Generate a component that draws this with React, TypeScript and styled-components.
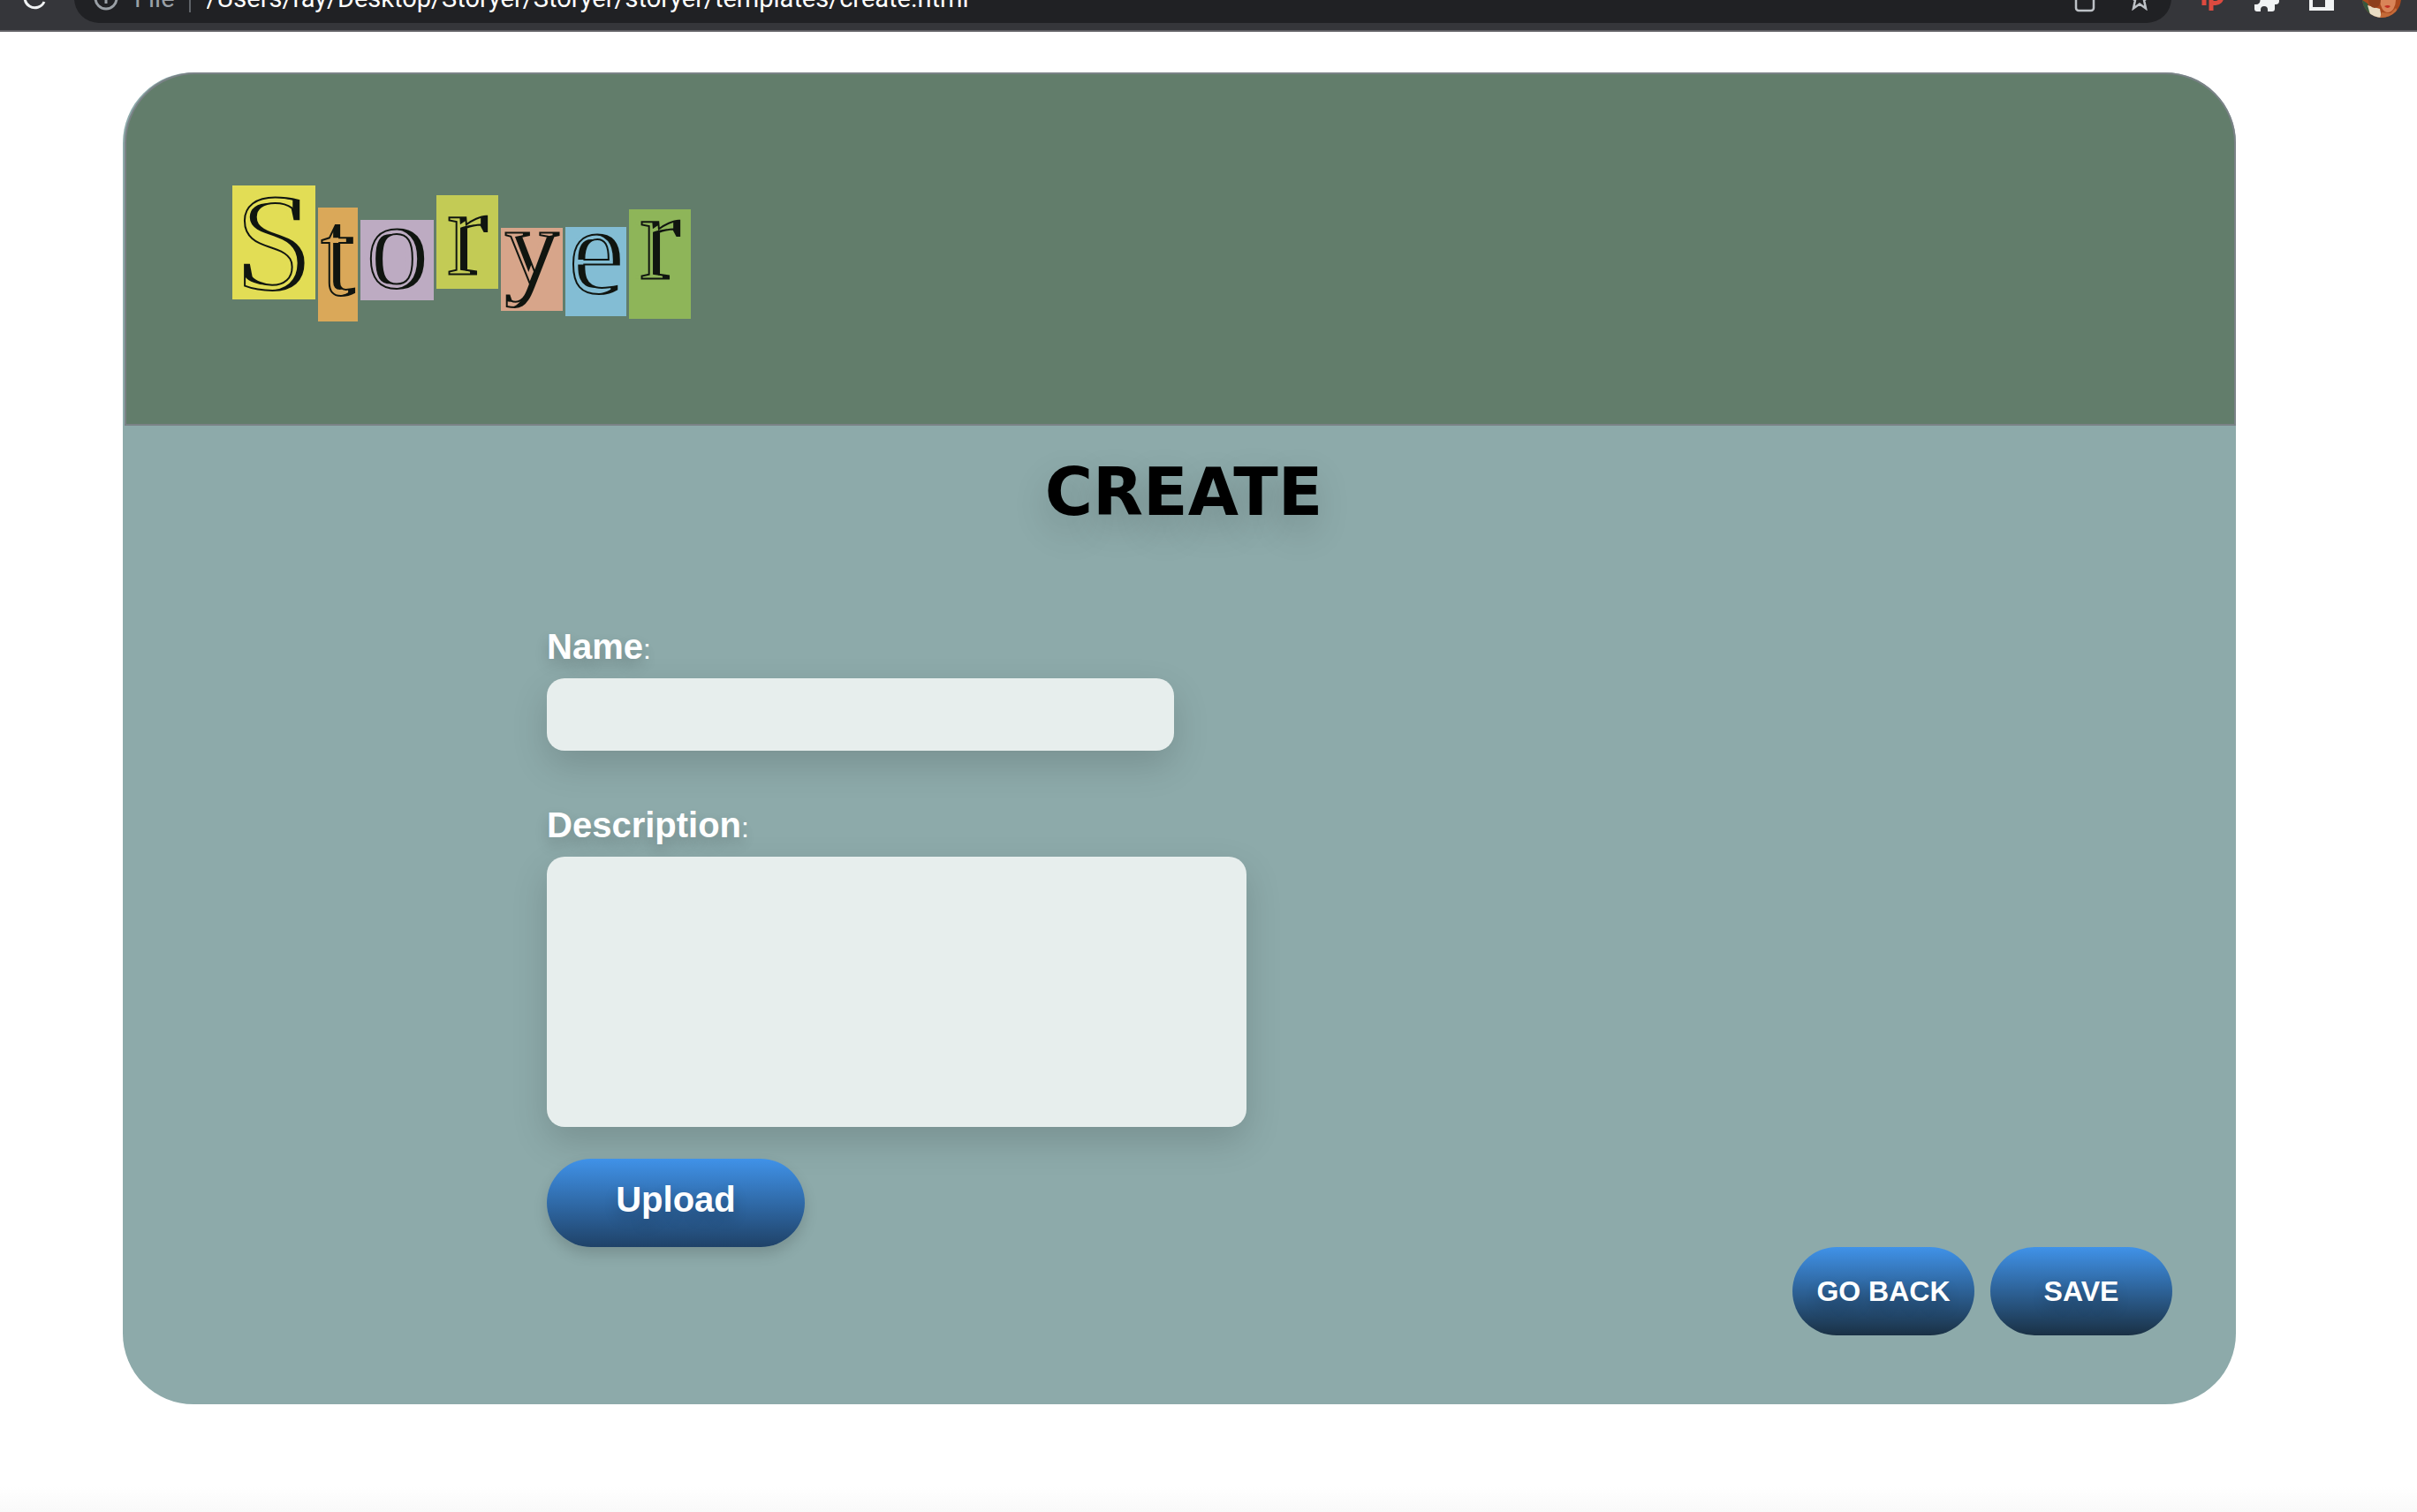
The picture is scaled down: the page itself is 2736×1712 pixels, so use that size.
import React from "react";
import styled, { createGlobalStyle } from "styled-components";

const ink = "#101510";

const GlobalStyle = createGlobalStyle`
  *, *::before, *::after { box-sizing: border-box; }
  body {
    margin: 0;
    background: #ffffff;
    font-family: "Liberation Sans", Arial, sans-serif;
  }
`;

const Page = styled.div`
  min-height: 100vh;
  display: flex;
  flex-direction: column;
`;

const Toolbar = styled.header`
  height: 36px;
  display: flex;
  align-items: flex-end;
  padding-bottom: 8px;
  background: #35363a;
  border-bottom: 2px solid #605f64;
  overflow: hidden;
`;

const ToolGroup = styled.div`
  height: 56px;
  flex: none;
  display: flex;
  align-items: center;
  gap: 32px;
  padding: 0 18px 0 34px;
`;

const ReloadGroup = styled(ToolGroup)`
  width: 84px;
  padding: 0 0 0 26px;
`;

const IconButton = styled.button`
  flex: none;
  display: flex;
  padding: 0;
  border: 0;
  background: none;
  color: inherit;
`;

const AddressBar = styled.div`
  flex: 1;
  min-width: 0;
  height: 56px;
  display: flex;
  align-items: center;
  padding: 0 22px;
  border-radius: 28px;
  background: #202124;
  color: #bdc1c6;
  font-family: Roboto, sans-serif;
  font-size: 29px;
`;

const Scheme = styled.span`
  margin-left: 18px;
  padding-right: 16px;
  border-right: 2px solid #5f6368;
  line-height: 32px;
  color: #9aa0a6;
`;

const AddressInput = styled.input`
  flex: 1;
  min-width: 0;
  margin-left: 18px;
  padding: 0;
  border: 0;
  outline: 0;
  background: none;
  color: #ffffff;
  font: inherit;
`;

const AddressActions = styled.div`
  display: flex;
  align-items: center;
  gap: 36px;
`;

const Main = styled.main`
  flex: 1;
  padding: 46px 205px 80px 139px;
`;

const Card = styled.section`
  border-radius: 80px;
  background: #8daaaa;
`;

const Banner = styled.div`
  height: 400px;
  margin-left: 2px;
  padding: 126px 120px 0;
  border: 2px solid #7a8286;
  border-radius: 80px 80px 0 0;
  background: #627d6b;
`;

const Logo = styled.h1`
  display: flex;
  align-items: flex-start;
  gap: 3px;
  margin: 0;
  font-family: "Liberation Serif", serif;
  font-weight: 400;
`;

const Tile = styled.span<{ $color: string; $w: number; $h: number; $drop: number; $line: number; $size: number }>`
  width: ${(p) => p.$w}px;
  height: ${(p) => p.$h}px;
  margin-top: ${(p) => p.$drop}px;
  display: flex;
  justify-content: center;
  clip-path: inset(0);
  background: ${(p) => p.$color};
  color: transparent;
  font-size: ${(p) => p.$size}px;
  line-height: ${(p) => p.$line}px;
  -webkit-text-stroke: 2px ${ink};
  text-shadow: -7px 0 0 ${(p) => p.$color}, 0 0 0 ${ink};
`;

const Title = styled.h2`
  margin: 0;
  padding: 27px 0 0 10px;
  text-align: center;
  color: #000000;
  font-family: "DejaVu Sans", sans-serif;
  font-size: 74px;
  font-weight: 700;
  line-height: 96px;
  text-shadow: 0 16px 40px rgba(0, 0, 0, 0.2);
`;

const Form = styled.form`
  display: flex;
  flex-direction: column;
  padding: 106px 72px 78px;
`;

const Fields = styled.div`
  display: flex;
  flex-direction: column;
  align-items: flex-start;
  padding-left: 408px;
`;

const Label = styled.label`
  margin-bottom: 9px;
  color: #ffffff;
  font-size: 32px;
  line-height: 48px;
  text-shadow: 0 8px 16px rgba(0, 0, 0, 0.2);

  strong {
    font-size: 40px;
    line-height: 1;
  }
`;

const fieldLook = `
  max-width: 100%;
  padding: 16px 20px;
  border: 0;
  border-radius: 20px;
  outline: 0;
  background: #e7eeed;
  box-shadow: 0 16px 40px rgba(0, 0, 0, 0.15);
  font: inherit;
  font-size: 32px;
`;

const NameInput = styled.input`
  ${fieldLook}
  width: 710px;
  height: 82px;
  margin-bottom: 63px;
`;

const DescriptionInput = styled.textarea`
  ${fieldLook}
  width: 792px;
  height: 306px;
  margin-bottom: 36px;
  resize: none;
`;

const Pill = styled.button<{ $end: string }>`
  width: 206px;
  height: 100px;
  padding: 0;
  border: 0;
  border-radius: 50px;
  background: linear-gradient(#4092e8, ${(p) => p.$end});
  color: #ffffff;
  font: inherit;
  font-size: 32px;
  font-weight: 700;
  text-shadow: 0 8px 16px rgba(0, 0, 0, 0.2);
`;

const UploadButton = styled(Pill)`
  width: 292px;
  padding-bottom: 8px;
  font-size: 40px;
  box-shadow: 0 8px 16px rgba(0, 0, 0, 0.15);
`;

const Actions = styled.div`
  display: flex;
  justify-content: flex-end;
  gap: 18px;
`;

const PageEdge = styled.footer`
  height: 28px;
  background: linear-gradient(#ffffff, #f9f9f9);
`;

const letters = [
  { ch: "S", color: "#e2dd55", w: 94, h: 129, drop: 0, line: 129, size: 156 },
  { ch: "t", color: "#daa859", w: 45, h: 129, drop: 25, line: 104, size: 140 },
  { ch: "o", color: "#bdabc2", w: 83, h: 91, drop: 39, line: 60, size: 140 },
  { ch: "r", color: "#c3cb55", w: 70, h: 106, drop: 11, line: 86, size: 140 },
  { ch: "y", color: "#d7a58a", w: 70, h: 94, drop: 48, line: 44, size: 124 },
  { ch: "e", color: "#83bdd4", w: 69, h: 101, drop: 47, line: 56, size: 140 },
  { ch: "r", color: "#8eb559", w: 70, h: 124, drop: 27, line: 64, size: 140 },
];

const ReloadIcon = () => (
  <svg width="28" height="28" viewBox="0 0 28 28" fill="none" stroke="#f1f3f4" strokeWidth="3">
    <path d="M24 18A11.500 11.500 0 1 1 22 5.500" />
    <path d="M25 1v9h-9z" fill="#f1f3f4" stroke="none" />
  </svg>
);

const InfoIcon = () => (
  <svg width="28" height="28" viewBox="0 0 28 28" fill="none" stroke="#9aa0a6" strokeWidth="3">
    <circle cx="14" cy="14" r="12" />
    <path d="M14 12v8M14 7v3" />
  </svg>
);

const ShareIcon = () => (
  <svg width="24" height="34" viewBox="0 0 24 34" fill="none" stroke="#bdc1c6" strokeWidth="2.500">
    <path d="M8 11H5a3 3 0 0 0-3 3v14a3 3 0 0 0 3 3h14a3 3 0 0 0 3-3V14a3 3 0 0 0-3-3h-3M12 19V3M7 8l5-5 5 5" />
  </svg>
);

const StarIcon = () => (
  <svg width="28" height="28" viewBox="0 0 28 28" fill="none" stroke="#bdc1c6" strokeWidth="2.500">
    <path d="M14 3l3.200 7.500 8.100.700-6.200 5.400L21 25.500l-7-5-7 5 1.900-8.900-6.200-5.400 8.100-.700z" />
  </svg>
);

const PinIcon = () => (
  <svg width="26" height="30" viewBox="0 0 26 30" fill="none" stroke="#dd4a3f" strokeWidth="5">
    <path d="M3 4v19M11 29V7h5a6.500 6.500 0 0 1 0 13.500h-4" />
  </svg>
);

const PuzzleIcon = () => (
  <svg width="32" height="30" viewBox="0 0 32 30" fill="#f1f3f4">
    <path d="M26 14h-1V8a3 3 0 0 0-3-3h-5V4a4 4 0 0 0-8 0v1H5a3 3 0 0 0-3 3v5h2a4 4 0 0 1 0 9H2v5a3 3 0 0 0 3 3h4v-2a4 4 0 0 1 8 0v2h5a3 3 0 0 0 3-3v-5h1a4 4 0 0 0 0-8z" />
  </svg>
);

const PanelIcon = () => (
  <svg width="28" height="28" viewBox="0 0 28 28">
    <path d="M0 0h28v28H0z" fill="#f1f3f4" />
    <path d="M4 4h14v20H4z" fill="#35363a" />
  </svg>
);

const Avatar = () => (
  <svg width="44" height="44" viewBox="0 0 44 44">
    <clipPath id="face">
      <circle cx="22" cy="22" r="22" />
    </clipPath>
    <g clipPath="url(#face)">
      <path d="M0 0h44v44H0z" fill="#a9481d" />
      <path d="M0 24l6 4 8 16H0z" fill="#36583f" />
      <path d="M6 30l14 4 2 10H10z" fill="#e9dcc4" />
      <ellipse cx="29" cy="24" rx="9" ry="14" fill="#d98458" />
      <ellipse cx="14" cy="24" rx="7" ry="9" fill="#8d3f1c" />
      <path d="M22 38l10 1 6-6 6 11H20z" fill="#c46a38" />
      <path d="M25 31q4-2 7 0-3 4-7 0z" fill="#c22f24" />
    </g>
  </svg>
);

export default function App() {
  return (
    <Page>
      <GlobalStyle />
      <Toolbar>
        <ReloadGroup>
          <IconButton type="button" aria-label="Reload"><ReloadIcon /></IconButton>
        </ReloadGroup>
        <AddressBar>
          <InfoIcon />
          <Scheme>File</Scheme>
          <AddressInput
            aria-label="Address"
            defaultValue="/Users/ray/Desktop/Storyer/Storyer/storyer/templates/create.html"
          />
          <AddressActions>
            <IconButton type="button" aria-label="Share"><ShareIcon /></IconButton>
            <IconButton type="button" aria-label="Bookmark"><StarIcon /></IconButton>
          </AddressActions>
        </AddressBar>
        <ToolGroup>
          <IconButton type="button" aria-label="Pin"><PinIcon /></IconButton>
          <IconButton type="button" aria-label="Extensions"><PuzzleIcon /></IconButton>
          <IconButton type="button" aria-label="Side panel"><PanelIcon /></IconButton>
          <IconButton type="button" aria-label="Profile"><Avatar /></IconButton>
        </ToolGroup>
      </Toolbar>
      <Main>
        <Card>
          <Banner>
            <Logo aria-label="Storyer">
              {letters.map((l, i) => (
                <Tile key={i} $color={l.color} $w={l.w} $h={l.h} $drop={l.drop} $line={l.line} $size={l.size}>
                  {l.ch}
                </Tile>
              ))}
            </Logo>
          </Banner>
          <Title>CREATE</Title>
          <Form onSubmit={(e) => e.preventDefault()}>
            <Fields>
              <Label htmlFor="name"><strong>Name</strong>:</Label>
              <NameInput id="name" type="text" />
              <Label htmlFor="description"><strong>Description</strong>:</Label>
              <DescriptionInput id="description" />
              <UploadButton type="button" $end="#1f4268">Upload</UploadButton>
            </Fields>
            <Actions>
              <Pill type="button" $end="#1a3145">GO BACK</Pill>
              <Pill type="submit" $end="#1a3145">SAVE</Pill>
            </Actions>
          </Form>
        </Card>
      </Main>
      <PageEdge />
    </Page>
  );
}
